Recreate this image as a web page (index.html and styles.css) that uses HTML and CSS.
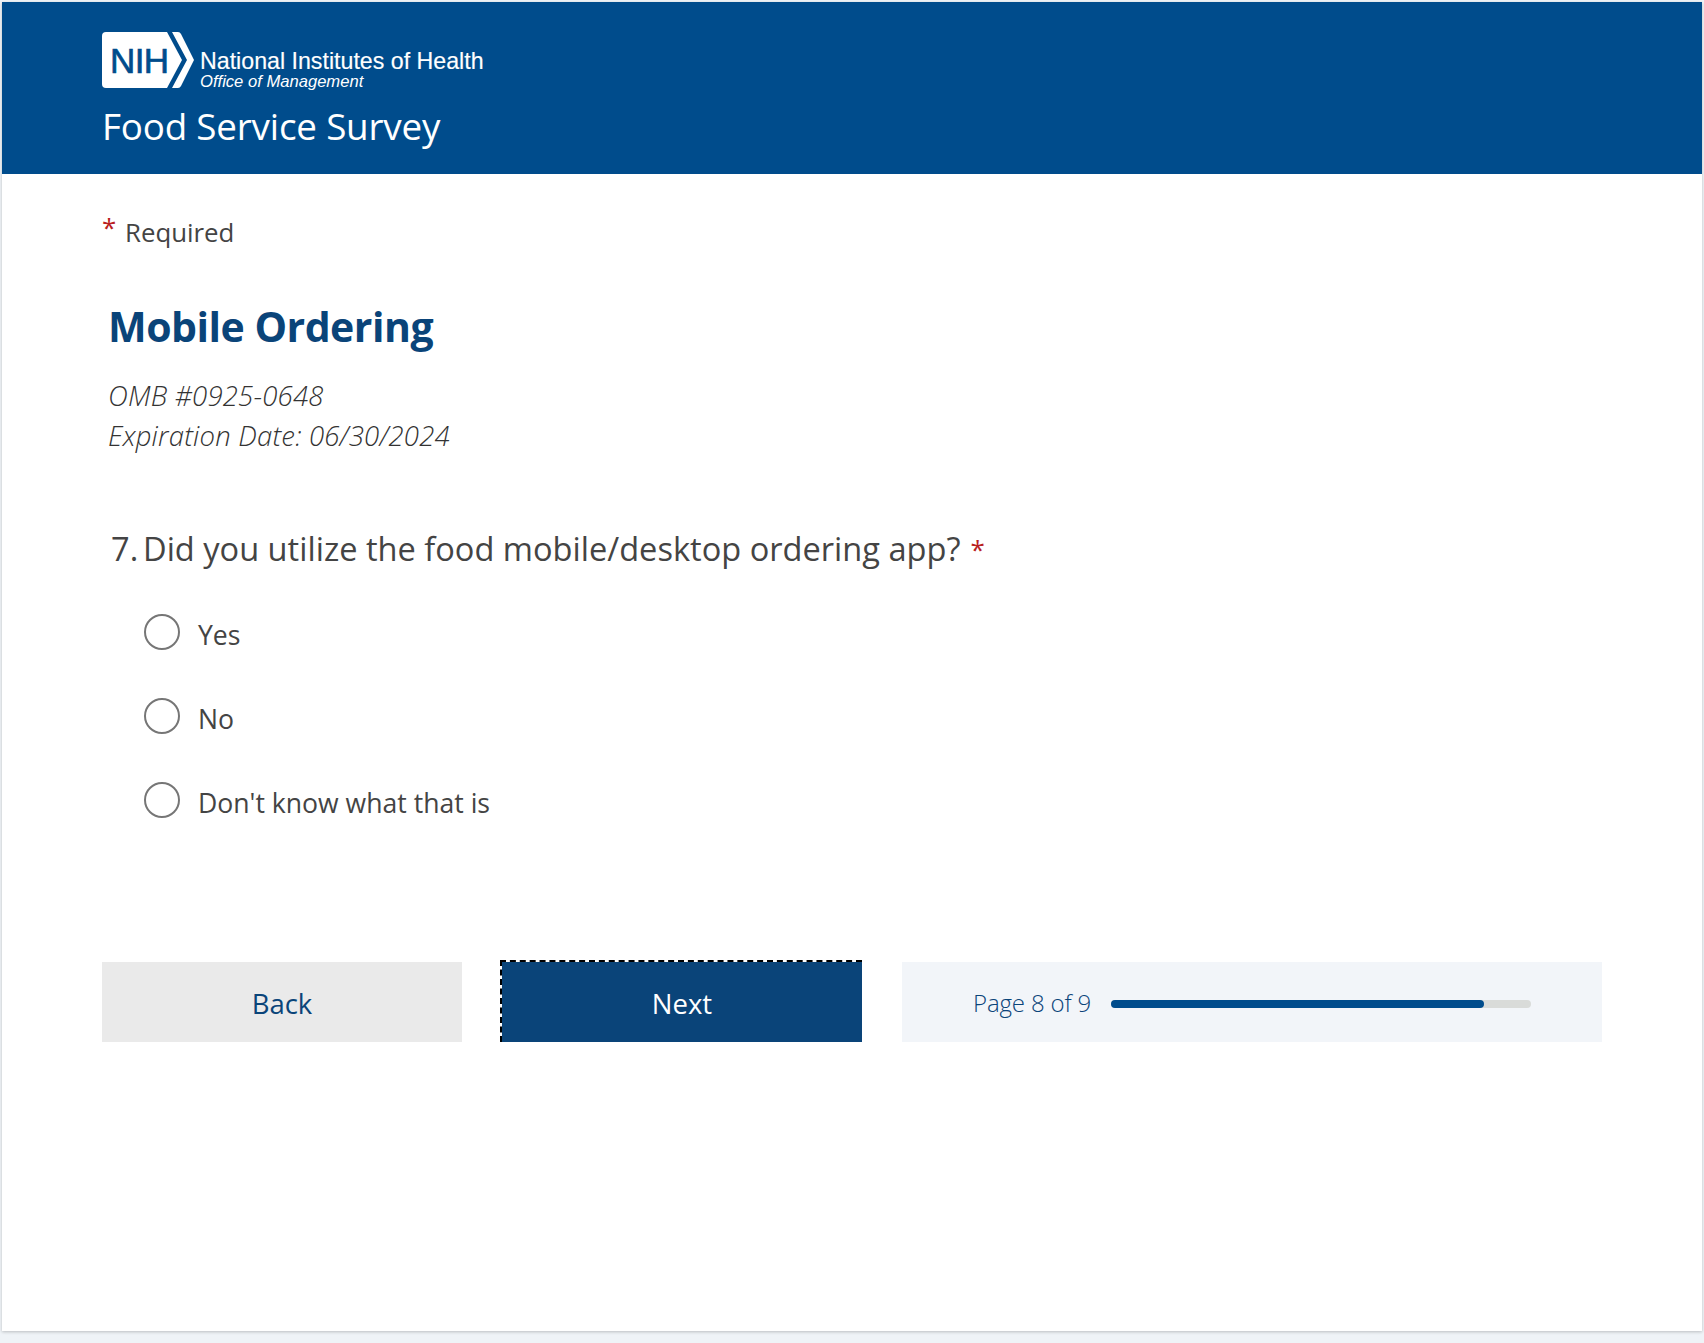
FILE: index.html
```html
<!DOCTYPE html>
<html lang="en">
<head>
<meta charset="utf-8">
<title>Food Service Survey</title>
<link rel="stylesheet" href="styles.css">
</head>
<body>
<main class="card">
  <header class="banner">
    <div class="logo">
      <svg class="logo-mark" width="92" height="56" viewBox="0 0 92 56" aria-hidden="true">
        <path d="M4 0H65L80 28L65 56H4Q0 56 0 52V4Q0 0 4 0Z" fill="#fff"/>
        <path d="M70 0H76Q78 0 79 2L92 28L79 54Q78 56 76 56H70L85 28Z" fill="#fff"/>
        <text x="8" y="41" class="logo-nih">NIH</text>
      </svg>
      <div class="logo-text">
        <div class="logo-name">National Institutes of Health</div>
        <div class="logo-office">Office of Management</div>
      </div>
    </div>
    <div class="survey-title">Food Service Survey</div>
  </header>
  <div class="content">
    <div class="required"><span class="star">*</span><span>Required</span></div>
    <h1 class="page-title">Mobile Ordering</h1>
    <div class="omb">
      <div>OMB #0925-0648</div>
      <div>Expiration Date: 06/30/2024</div>
    </div>
    <div class="question"><span class="qnum">7.</span><span>Did you utilize the food mobile/desktop ordering app?</span><span class="qstar">*</span></div>
    <div class="options">
      <label class="option"><span class="radio"></span><span class="option-text">Yes</span></label>
      <label class="option"><span class="radio"></span><span class="option-text">No</span></label>
      <label class="option"><span class="radio"></span><span class="option-text">Don't know what that is</span></label>
    </div>
    <div class="footer-row">
      <button class="btn btn-back">Back</button>
      <button class="btn btn-next">Next</button>
      <div class="progress">
        <span class="progress-label">Page 8 of 9</span>
        <div class="track"><div class="fill"></div></div>
      </div>
    </div>
  </div>
</main>
</body>
</html>
```
FILE: styles.css
```css
* { box-sizing: border-box; }
html, body { margin: 0; height: 100%; }
body {
  background: #eff3f7;
  padding: 2px 2px 0;
  font-family: "Open Sans", "Noto Sans", sans-serif;
  color: #444;
  overflow: hidden;
}
.card {
  height: 1329px;
  background: #fff;
  box-shadow: 0 1px 3px rgba(0,0,0,.22);
}
.banner {
  height: 172px;
  background: #004c8c;
  padding: 30px 0 0 100px;
  color: #fff;
}
.logo { display: flex; align-items: flex-start; }
.logo-mark { display: block; flex: none; }
.logo-nih {
  font-family: "Liberation Sans", Arial, sans-serif;
  font-size: 35px;
  fill: #004c8c;
  stroke: #004c8c;
  stroke-width: 0.7px;
  letter-spacing: -0.6px;
}
.logo-text { font-family: "Liberation Sans", Arial, sans-serif; margin: 17px 0 0 6px; }
.logo-name { font-size: 23.2px; line-height: 25px; -webkit-text-stroke: 0.15px #fff; }
.logo-office { font-size: 16.6px; line-height: 15px; font-style: italic; }
.survey-title { font-size: 36.8px; line-height: 50px; margin-top: 12px; letter-spacing: -0.2px; }
.content { padding: 34px 100px 0; }
.required { display: flex; font-size: 25.8px; line-height: 48px; height: 48px; }
.star { color: #b92020; width: 23px; line-height: 38px; }
.page-title {
  margin: 42px 0 0 6px;
  font-size: 41px;
  line-height: 56px;
  font-weight: 700;
  color: #0a4479;
  letter-spacing: -0.5px;
}
.omb {
  margin: 22px 0 0 6px;
  font-size: 27.5px;
  line-height: 40px;
  font-style: italic;
  font-weight: 300;
  letter-spacing: 0.2px;
  color: #333;
}
.question { display: flex; margin: 70px 0 0 9px; font-size: 32.6px; line-height: 46px; }
.qnum { width: 32px; }
.qstar { color: #b92020; margin-left: 10px; font-size: 26px; }
.options { margin: 42px 0 0 42px; display: flex; flex-direction: column; gap: 48px; }
.option { display: flex; align-items: center; height: 36px; }
.radio { width: 36px; height: 36px; border: 2px solid #767676; border-radius: 50%; flex: none; }
.option-text { margin: 5px 0 0 18px; font-size: 26.6px; line-height: 36px; }
.footer-row { display: flex; margin-top: 144px; height: 80px; align-items: flex-end; }
.btn {
  height: 80px;
  border: 0;
  padding: 2px 0 0;
  font-family: inherit;
  font-size: 27.5px;
  border-radius: 0;
}
.btn-back { width: 360px; background: #eaeaea; color: #0a4479; }
.btn-next {
  width: 362px;
  height: 82px;
  margin-left: 38px;
  background: #0a4479;
  background-clip: padding-box;
  color: #fff;
  border-top: 2px dashed #000;
  border-left: 2px dashed #000;
}
.progress {
  width: 700px;
  height: 80px;
  margin-left: 40px;
  background: #f2f5f9;
  display: flex;
  align-items: center;
  padding-left: 71px;
  color: #0a4479;
}
.progress-label { width: 138px; font-size: 24px; letter-spacing: -0.15px; font-weight: 300; }
.track { width: 420px; height: 8px; margin-top: 4px; background: #d9dbd9; border-radius: 4px; }
.fill { width: 373px; height: 8px; background: #004c8c; border-radius: 4px; }
```
